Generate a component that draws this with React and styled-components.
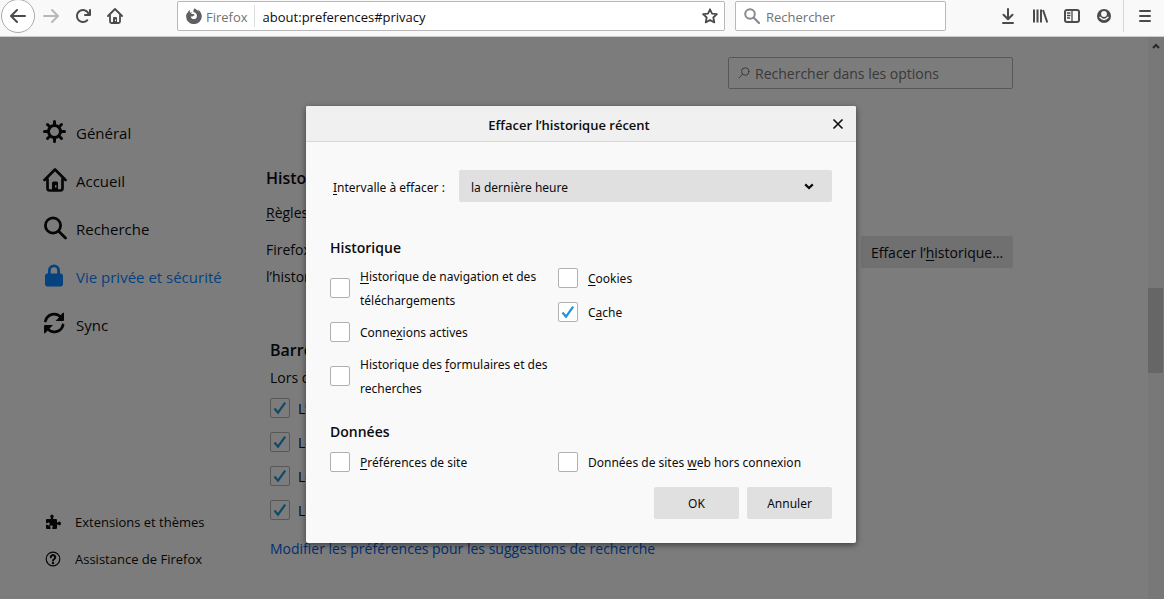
import React from 'react'
import styled, { createGlobalStyle } from 'styled-components'

function App() {
  return (
    <Browser>
      <GlobalStyle />
      <Toolbar />
      <Viewport>
        <Sidebar />
        <Preferences />
        <Scrollbar>
          <ScrollArrow viewBox="0 0 8 6"><path d="M1 5 L4 2 L7 5" /></ScrollArrow>
          <Thumb />
        </Scrollbar>
        <Backdrop>
          <ClearHistoryDialog />
        </Backdrop>
      </Viewport>
    </Browser>
  )
}

export default App

function Toolbar() {
  return (
    <Bar>
      <BackButton aria-label="Précédent"><BackIcon /></BackButton>
      <NavButtons>
        <ToolButton aria-label="Suivant" disabled><ForwardIcon /></ToolButton>
        <ToolButton aria-label="Actualiser"><ReloadIcon /></ToolButton>
        <ToolButton aria-label="Accueil"><HomeIcon /></ToolButton>
      </NavButtons>
      <UrlBar>
        <Identity>
          <FirefoxIcon />
          <span>Firefox</span>
        </Identity>
        <BarInput aria-label="Adresse" defaultValue="about:preferences#privacy" />
        <ToolButton aria-label="Marquer cette page"><StarIcon /></ToolButton>
      </UrlBar>
      <SearchBar>
        <MagnifierIcon />
        <BarInput aria-label="Recherche web" placeholder="Rechercher" />
      </SearchBar>
      <ToolGroup>
        <ToolButton aria-label="Téléchargements"><DownloadIcon /></ToolButton>
        <ToolButton aria-label="Bibliothèque"><LibraryIcon /></ToolButton>
        <ToolButton aria-label="Panneaux latéraux"><PanelIcon /></ToolButton>
        <ToolButton aria-label="Compte"><AccountIcon /></ToolButton>
      </ToolGroup>
      <MenuArea>
        <ToolButton aria-label="Menu"><MenuIcon /></ToolButton>
      </MenuArea>
    </Bar>
  )
}

function Sidebar() {
  return (
    <Side>
      <Category href="#general"><GearIcon /><span>Général</span></Category>
      <Category href="#home"><HomeIcon size={24} /><span>Accueil</span></Category>
      <Category href="#search"><SearchIcon /><span>Recherche</span></Category>
      <Category href="#privacy" $active><LockIcon /><span>Vie privée et sécurité</span></Category>
      <Category href="#sync"><SyncIcon /><span>Sync</span></Category>
      <SideFooter>
        <SideLink href="#addons"><PuzzleIcon />Extensions et thèmes</SideLink>
        <SideLink href="#support"><HelpIcon />Assistance de Firefox</SideLink>
      </SideFooter>
    </Side>
  )
}

function Preferences() {
  return (
    <Main>
      <OptionSearch>
        <OptionMagnifier />
        <input aria-label="Rechercher dans les options" placeholder="Rechercher dans les options" />
      </OptionSearch>
      <HistorySection>
        <h2>Historique</h2>
        <Rules><u>R</u>ègles</Rules>
        <HistoryRow>
          <p>Firefox<br />l’historique</p>
          <ClearButton>Effacer l’<u>h</u>istorique…</ClearButton>
        </HistoryRow>
      </HistorySection>
      <AddressSection>
        <h2>Barre</h2>
        <p>Lors de</p>
        <Check checked compact text="L’" label="L’historique de navigation" />
        <Check checked compact text="Les" label="Les marque-pages" />
        <Check checked compact text="Les" label="Les onglets ouverts" />
        <Check checked compact text="Les" label="Les sites les plus visités" />
        <SuggestLink href="#search">Modifier les préférences pour les suggestions de recherche</SuggestLink>
      </AddressSection>
    </Main>
  )
}

function ClearHistoryDialog() {
  return (
    <Dialog role="dialog" aria-labelledby="dialog-title">
      <DialogHeader>
        <DialogTitle id="dialog-title">Effacer l’historique récent</DialogTitle>
        <CloseButton aria-label="Fermer">
          <svg width="12" height="12" viewBox="0 0 12 12" fill="none" stroke="currentColor" strokeWidth="1.6">
            <path d="M1.5 1.5l9 9M10.5 1.5l-9 9" />
          </svg>
        </CloseButton>
      </DialogHeader>
      <DialogBody>
        <RangeRow>
          <label htmlFor="range"><u>I</u>ntervalle à effacer :</label>
          <SelectBox>
            <select id="range" defaultValue="hour">
              <option value="hour">la dernière heure</option>
            </select>
            <svg width="10" height="7" viewBox="0 0 10 7" fill="none" stroke="#0c0c0d" strokeWidth="2.2">
              <path d="M1.2 1.4 L5 5 L8.8 1.4" />
            </svg>
          </SelectBox>
        </RangeRow>
        <GroupTitle>Historique</GroupTitle>
        <Columns>
          <div>
            <Check text={<><u>H</u>istorique de navigation et des téléchargements</>} />
            <Check text={<>Conne<u>x</u>ions actives</>} />
            <Check text={<>Historique des <u>f</u>ormulaires et des recherches</>} />
          </div>
          <div>
            <Check text={<><u>C</u>ookies</>} />
            <Check checked text={<>C<u>a</u>che</>} />
          </div>
        </Columns>
        <DataTitle>Données</DataTitle>
        <Columns>
          <Check text={<><u>P</u>références de site</>} />
          <Check text={<>Données de sites <u>w</u>eb hors connexion</>} />
        </Columns>
        <Actions>
          <DialogButton>OK</DialogButton>
          <DialogButton>Annuler</DialogButton>
        </Actions>
      </DialogBody>
    </Dialog>
  )
}

function Check({ checked, compact, text, label }) {
  return (
    <CheckRow $compact={compact}>
      <CheckBox>
        <input type="checkbox" defaultChecked={checked} aria-label={label} />
        <svg width="20" height="20" viewBox="0 0 20 20" fill="none" stroke="#2292d0" strokeWidth="2.2">
          <path d="M4.5 10.5 L8 14.6 L15.2 4.6" />
        </svg>
      </CheckBox>
      <CheckText>{text}</CheckText>
    </CheckRow>
  )
}

/* icons */

const Icon = ({ size = 16, box = 16, children, ...rest }) => (
  <svg width={size} height={size} viewBox={`0 0 ${box} ${box}`} fill="currentColor" aria-hidden="true" {...rest}>
    {children}
  </svg>
)

const line = { fill: 'none', stroke: 'currentColor', strokeWidth: 2, strokeLinecap: 'round', strokeLinejoin: 'round' }

const BackIcon = () => <Icon><path {...line} d="M15 8H1.5M7 2L1 8l6 6" /></Icon>
const ForwardIcon = () => <Icon><path {...line} d="M1 8h13.5M9 2l6 6-6 6" /></Icon>
const ReloadIcon = () => (
  <Icon><path d="M15 1a1 1 0 0 0-1 1v2.418A6.995 6.995 0 1 0 8 15a6.954 6.954 0 0 0 4.95-2.05 1 1 0 0 0-1.414-1.414A5.019 5.019 0 1 1 12.549 6H10a1 1 0 0 0 0 2h5a1 1 0 0 0 1-1V2a1 1 0 0 0-1-1z" /></Icon>
)
const HomeIcon = ({ size }) => (
  <Icon size={size}>
    <path {...line} strokeWidth="1.8" d="M1 8l7-7 7 7" />
    <path {...line} strokeWidth="1.8" d="M3 7.5v6a1.5 1.5 0 0 0 1.5 1.5h7a1.5 1.5 0 0 0 1.5-1.5v-6" />
    <path fillRule="evenodd" d="M6 15V10a1 1 0 0 1 1-1h2a1 1 0 0 1 1 1v5zM8 11.500v1.500h1v-1.500z" />
  </Icon>
)
const FirefoxIcon = () => (
  <Icon>
    <path d="M15 5.200C14.400 3.600 13 2 11.800 1.400c.6 1 .9 1.800 1 2.300C11.500 1.800 9.600 1.600 8.700.2 7.400 1.300 7.300 2.900 7.500 4c1.900.3 3.400 1.600 3.400 3.900A3.100 3.100 0 0 1 7.800 11C6 11 4.800 9.700 4.800 8.400c.7.3 1.700.3 2.300-.3.5-.5 1.200-.6 1.500-.9-.2-.7-.9-1.200-1.900-1.100-.8.1-1.200-.1-1.500-.5.1-.6.6-1.100 1.200-1.400-.8-.2-1.700.1-2.300.6-.5-.7-.4-2 0-2.900C2.700 2.600 2 3.700 1.700 4.500.7 5.500.1 7 .1 8.400a7.800 7.800 0 0 0 15.700-.3c0-1-.3-2-.8-2.900z" />
  </Icon>
)
const StarIcon = () => (
  <Icon><path {...line} strokeWidth="1.8" d="M8 1.300l2 4.400 4.900.5-3.600 3.300 1 4.900L8 12l-4.300 2.400 1-4.900L1.100 6.200 6 5.700z" /></Icon>
)
const MagnifierIcon = () => (
  <Icon color="#8a8a8c"><g {...line}><circle cx="6" cy="6" r="4.8" /><path strokeWidth="2.2" d="M9.800 9.800L15 15" /></g></Icon>
)
const DownloadIcon = () => <Icon><path {...line} d="M8 1v10M3.500 6.800L8 11.300l4.500-4.500M3 15h10" /></Icon>
const LibraryIcon = () => (
  <Icon><path {...line} strokeLinecap="butt" d="M2 1.500v13M5.500 1.500v13M9 1.500v13M11 2l4.300 12.500" /></Icon>
)
const PanelIcon = () => (
  <Icon>
    <rect {...line} x="1" y="2" width="14" height="12" rx="2" />
    <path {...line} strokeLinecap="butt" strokeWidth="1.3" d="M8 2v12M3 5h3.500M3 7.500h3.500M3 10h3" />
  </Icon>
)
const AccountIcon = () => (
  <Icon>
    <circle cx="8" cy="8" r="7" />
    <circle cx="8" cy="6" r="2.9" fill="#f9f9fa" />
    <path {...line} stroke="#f9f9fa" strokeWidth="1.5" d="M4 9.3Q8 13.600 12 9.300" />
  </Icon>
)
const MenuIcon = () => <Icon><path {...line} d="M3 3h10M3 8h10M3 13h10" /></Icon>

const GearIcon = () => (
  <Icon size={24} box={24}>
    <circle cx="11.5" cy="11.5" r="6" fill="none" stroke="currentColor" strokeWidth="3" />
    <path {...line} strokeWidth="3" d="M11.5 1.500v3M11.5 18.500v3M1.500 11.500h3M18.500 11.500h3M4.500 4.500l2 2M16.500 16.500l2 2M4.500 18.500l2-2M16.500 6.500l2-2" />
  </Icon>
)
const SearchIcon = () => (
  <Icon size={24} box={24}><g {...line} strokeWidth="2.8"><circle cx="10" cy="9.5" r="7.6" /><path d="M15.700 15.200L22.500 22" /></g></Icon>
)
const LockIcon = () => (
  <Icon size={24} box={24}>
    <path d="M17 9.500V6.500a6 6 0 0 0-12 0v3H4A2.200 2.200 0 0 0 2 11.700v8.600A2.200 2.200 0 0 0 4 22.500h14a2.200 2.200 0 0 0 2-2.200v-8.600a2.200 2.200 0 0 0-2-2.200zM7.800 6.500a3.200 3.200 0 0 1 6.400 0v3h-6.400z" />
  </Icon>
)
const SyncIcon = () => (
  <Icon size={24} box={24}>
    <path {...line} strokeWidth="2.8" d="M2.500 9a8.800 8.800 0 0 1 15.500-3.500M20 13A8.800 8.800 0 0 1 4.500 16.500" />
    <path d="M21 .5v7.500a1 1 0 0 1-1 1H12.500L16 5.500l3-4zM1 21.500V14a1 1 0 0 1 1-1H10L6.500 16.500l-3.500 4z" />
  </Icon>
)
const PuzzleIcon = () => (
  <Icon><path d="M14.500 7.500c-.9 0-1 1-1.900 1-.6 0-.6-.5-.6-1V6a1 1 0 0 0-1-1H9C8.500 5 8 4.900 8 4.300c0-.8.700-.9.700-2C8.700 1.400 7.900.800 7 .800S5.200 1.400 5.200 2.300c0 1.100.8 1.200.8 2C6 4.900 5.500 5 5 5H2a1 1 0 0 0-1 1v2.300c0 .5.100.9.700.9.800 0 .9-.8 1.700-.8s1.300.6 1.300 1.500-.5 1.500-1.300 1.500c-.9 0-.9-.8-1.700-.8-.6 0-.7.500-.7 1V14a1 1 0 0 0 1 1h2.800c.5 0 .9-.1.900-.7 0-.8-.7-.9-.7-1.700s.6-1.200 1.400-1.200 1.500.4 1.500 1.200-.8.9-.8 1.700c0 .6.500.7 1 .7H11a1 1 0 0 0 1-1v-2.500c0-.5 0-1 .6-1 .9 0 1 .8 1.900.8 .8 0 1.500-.8 1.500-1.800s-.7-2-1.500-2z" /></Icon>
)
const HelpIcon = () => (
  <Icon>
    <circle {...line} cx="8" cy="8" r="6.8" strokeWidth="1.2" />
    <path {...line} d="M5.800 6.200a2.200 2.200 0 1 1 3.500 1.800C8.400 8.600 8 8.900 8 9.500" />
    <circle cx="8" cy="12" r="1.2" />
  </Icon>
)
const OptionMagnifier = () => (
  <Icon size={12} box={12}><g {...line} strokeWidth="1"><circle cx="7.2" cy="4.5" r="3.7" /><path d="M4.500 7.300L.8 11" /></g></Icon>
)

/* styles */

const GlobalStyle = createGlobalStyle`
  * {
    box-sizing: border-box;
  }

  body {
    margin: 0;
    background: #f9f9fa;
    color: #0c0c0d;
    font-family: "Open Sans", "Noto Sans", sans-serif;
    font-size: 14px;
  }

  button, input, select {
    font: inherit;
    color: inherit;
  }

  h1, h2, h3, p {
    margin: 0;
  }

  u {
    text-underline-offset: 2px;
    text-decoration-thickness: 1px;
  }
`

const Browser = styled.div`
  display: flex;
  flex-direction: column;
  min-height: 100vh;
`

const Bar = styled.header`
  display: flex;
  align-items: center;
  height: 37px;
  padding: 0 0 5px 1px;
  border-bottom: 1px solid #ccc;
  background: #f9f9fa;
  color: #4a4a4f;
  font-size: 13px;
`

const ToolButton = styled.button`
  display: flex;
  padding: 0;
  border: 0;
  background: none;

  &:disabled {
    color: #b8b8ba;
  }
`

const BackButton = styled(ToolButton)`
  justify-content: center;
  align-items: center;
  flex: none;
  width: 34px;
  height: 34px;
  border: 1px solid #aaa;
  border-radius: 50%;
  background: #fff;
`

const NavButtons = styled.nav`
  display: flex;
  gap: 16px;
  margin: 0 54px 0 8px;
`

const Field = styled.div`
  display: flex;
  align-items: center;
  height: 30px;
  border: 1px solid #b8b8b8;
  border-radius: 2px;
  background: #fff;
  padding: 0 6px 0 8px;
`

const UrlBar = styled(Field)`
  flex: 1;
  margin-right: 10px;
`

const Identity = styled.div`
  display: flex;
  align-items: center;
  gap: 4px;
  height: 22px;
  padding-right: 6px;
  border-right: 1px solid #ddd;
  color: #737373;

  svg {
    color: #5f5f63;
  }

  span {
    padding-top: 2px;
  }
`

const BarInput = styled.input`
  flex: 1;
  min-width: 0;
  padding: 2px 8px 0;
  border: 0;
  outline: 0;
  background: none;
  color: #0c0c0d;

  &::placeholder {
    color: #737373;
    opacity: 1;
  }
`

const SearchBar = styled(Field)`
  width: 211px;

  input {
    padding: 2px 6px 0;
  }
`

const ToolGroup = styled.div`
  display: flex;
  gap: 16px;
  margin: 0 11px 0 54px;
`

const MenuArea = styled.div`
  display: flex;
  align-items: center;
  height: 32px;
  padding: 0 11px 0 13px;
  border-left: 1px solid #d7d7db;
`

const Viewport = styled.div`
  position: relative;
  display: flex;
  flex: 1;
`

const Side = styled.nav`
  display: flex;
  flex-direction: column;
  flex: none;
  width: 266px;
  padding: 71px 0 22px 43px;
`

const Category = styled.a`
  display: flex;
  align-items: center;
  gap: 9px;
  height: 48px;
  color: ${(p) => (p.$active ? '#0a84ff' : '#0c0c0d')};
  font-size: 15px;
  text-decoration: none;

  span {
    padding-top: 2px;
  }
`

const SideFooter = styled.div`
  margin-top: auto;
`

const SideLink = styled.a`
  display: flex;
  align-items: center;
  gap: 14px;
  height: 37px;
  padding-left: 2px;
  color: #0c0c0d;
  font-size: 13px;
  text-decoration: none;
`

const Main = styled.main`
  display: flex;
  flex-direction: column;
  flex: 1;
  max-width: 747px;
  padding-top: 20px;

  h2 {
    font-size: 16px;
    font-weight: 600;
    line-height: 24px;
  }
`

const OptionSearch = styled.div`
  display: flex;
  align-items: center;
  align-self: flex-end;
  gap: 5px;
  width: 285px;
  height: 32px;
  padding: 0 9px;
  border: 1px solid #b1b1b3;
  border-radius: 2px;
  color: #737373;

  input {
    flex: 1;
    min-width: 0;
    padding: 0;
    border: 0;
    background: none;
  }

  input::placeholder {
    color: #737373;
    opacity: 1;
  }
`

const HistorySection = styled.section`
  margin-top: 77px;
`

const Rules = styled.p`
  margin-top: 10px;
  line-height: 26px;
`

const HistoryRow = styled.div`
  display: flex;
  justify-content: space-between;
  align-items: flex-start;
  margin-top: 10px;
  line-height: 27px;
`

const ClearButton = styled.button`
  flex: none;
  width: 152px;
  height: 32px;
  padding: 0;
  border: 0;
  border-radius: 2px;
  background: #e0e0e1;
`

const AddressSection = styled.section`
  margin-top: 48px;
  padding-left: 4px;

  p {
    line-height: 24px;
    margin: 4px 0 1px;
  }
`

const SuggestLink = styled.a`
  display: block;
  margin-top: 9px;
  color: #0060df;
  line-height: 26px;
  text-decoration: none;
`

const CheckRow = styled.label`
  display: flex;
  align-items: center;
  gap: ${(p) => (p.$compact ? 8 : 10)}px;
  min-height: 34px;
  padding: 2px 0;
  line-height: 24px;
`

const CheckText = styled.span`
  padding-top: 2px;
`

const CheckBox = styled.span`
  display: grid;
  flex: none;

  input, svg {
    grid-area: 1 / 1;
  }

  input {
    appearance: none;
    width: 20px;
    height: 20px;
    margin: 0;
    border: 1px solid #b1b1b3;
    border-radius: 2px;
    background: #fff;
  }

  svg {
    visibility: hidden;
    pointer-events: none;
  }

  input:checked + svg {
    visibility: visible;
  }

  ${AddressSection} & input {
    background: none;
  }
`

const Scrollbar = styled.div`
  display: flex;
  flex-direction: column;
  width: 16px;
  margin-left: auto;
  padding: 6px 1px 0 0;
  background: #f0f0f0;
`

const ScrollArrow = styled.svg`
  align-self: center;
  width: 8px;
  height: 6px;
  fill: none;
  stroke: #505050;
  stroke-width: 2;
`

const Thumb = styled.div`
  height: 85px;
  margin-top: 239px;
  background: #cdcdcd;
`

const Backdrop = styled.div`
  position: absolute;
  inset: 0;
  display: flex;
  justify-content: center;
  align-items: flex-start;
  padding: 69px 2px 0 0;
  background: rgba(0, 0, 0, 0.5);
`

const Dialog = styled.section`
  width: 550px;
  border-radius: 2px;
  background: #f9f9fa;
  box-shadow: 0 2px 6px rgba(0, 0, 0, 0.5);
  font-family: "Noto Sans", "Open Sans", sans-serif;
  font-size: 12px;
`

const DialogHeader = styled.header`
  display: flex;
  align-items: center;
  height: 36px;
  padding: 0 12px 0 0;
  border-bottom: 1px solid #d7d7db;
  border-radius: 2px 2px 0 0;
  background: #f0f0f0;
`

const DialogTitle = styled.h1`
  flex: 1;
  padding: 2px 0 0 0;
  font-family: "Open Sans", sans-serif;
  font-size: 13px;
  font-weight: 600;
  text-align: center;
`

const CloseButton = styled.button`
  display: flex;
  padding: 0;
  border: 0;
  background: none;
`

const DialogBody = styled.div`
  padding: 28px 24px 24px;
`

const RangeRow = styled.div`
  display: flex;
  align-items: center;
  margin-bottom: 33px;
  padding-left: 3px;

  label {
    width: 126px;
    padding-top: 2px;
    white-space: nowrap;
  }
`

const SelectBox = styled.div`
  display: grid;
  flex: 1;
  align-items: center;

  select, svg {
    grid-area: 1 / 1;
  }

  select {
    appearance: none;
    width: 100%;
    height: 32px;
    padding: 2px 12px 0;
    border: 0;
    border-radius: 2px;
    background: #e0e0e1;
  }

  svg {
    justify-self: end;
    margin-right: 18px;
    pointer-events: none;
  }
`

const GroupTitle = styled.h2`
  font-family: "Open Sans", sans-serif;
  font-size: 14px;
  font-weight: 600;
  line-height: 26px;
`

const DataTitle = styled(GroupTitle)`
  margin-top: 16px;
`

const Columns = styled.div`
  display: grid;
  grid-template-columns: 228px 1fr;
`

const Actions = styled.div`
  display: flex;
  justify-content: flex-end;
  gap: 8px;
  margin-top: 8px;
`

const DialogButton = styled.button`
  width: 85px;
  height: 32px;
  border: 0;
  border-radius: 2px;
  background: #e0e0e1;
`
